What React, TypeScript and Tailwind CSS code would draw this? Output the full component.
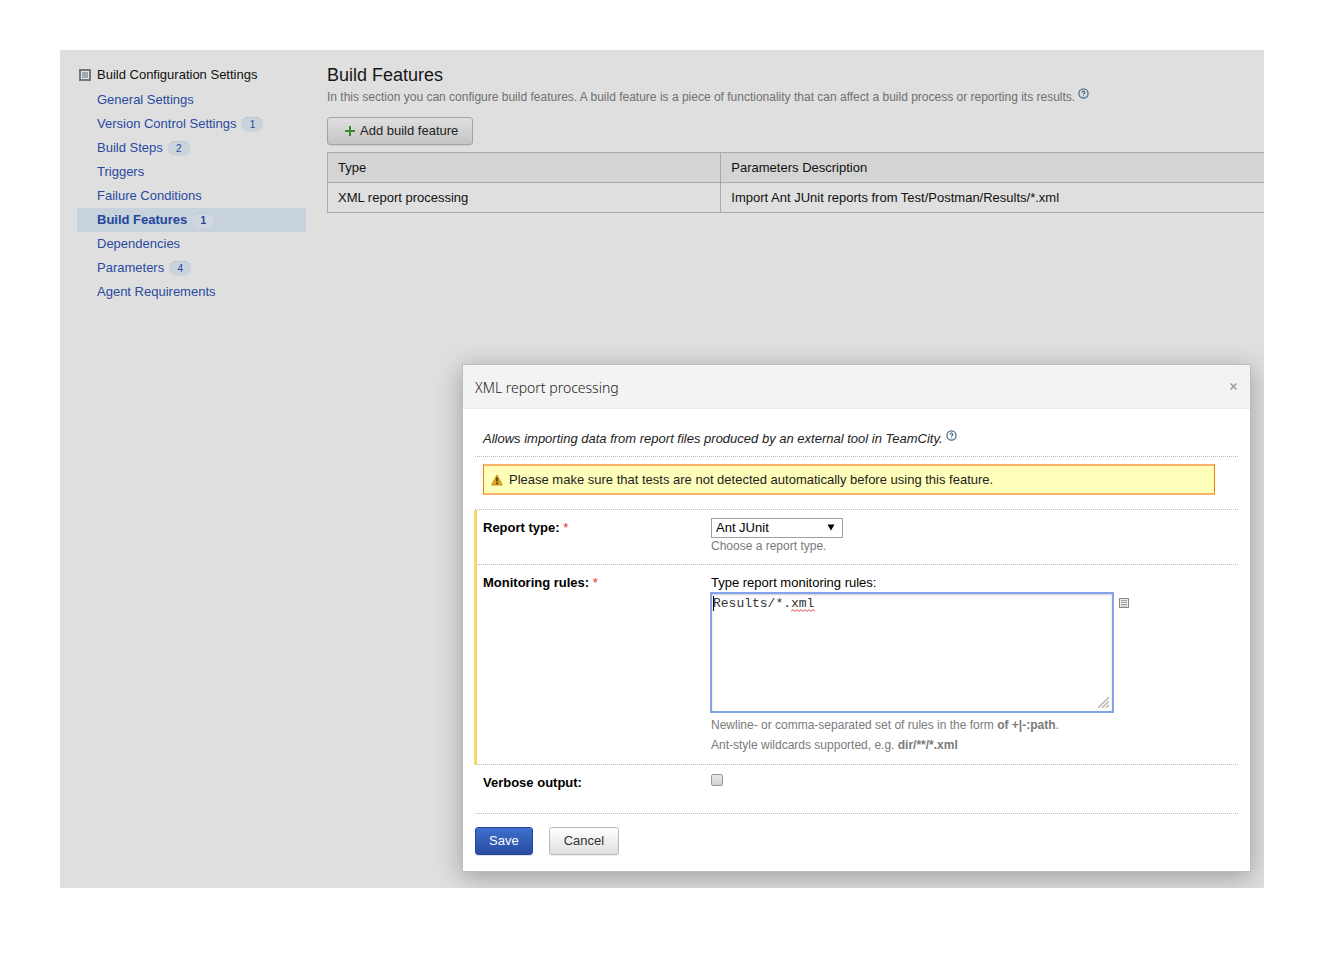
import React from "react";
import { CircleHelp } from "lucide-react";

type NavItem = { label: string; count?: number; active?: boolean };

const navItems: NavItem[] = [
  { label: "General Settings" },
  { label: "Version Control Settings", count: 1 },
  { label: "Build Steps", count: 2 },
  { label: "Triggers" },
  { label: "Failure Conditions" },
  { label: "Build Features", count: 1, active: true },
  { label: "Dependencies" },
  { label: "Parameters", count: 4 },
  { label: "Agent Requirements" },
];

function Sidebar() {
  return (
    <nav className="w-[229px] shrink-0" aria-label="Build configuration settings">
      <div className="mb-px flex h-6 items-center gap-[6px] pl-[2px] text-[#111]">
        <svg width="12" height="12" viewBox="0 0 12 12" aria-hidden="true">
          <rect x="1" y="1" width="10" height="10" fill="#e4e4e4" stroke="#777" strokeWidth="2" />
          <rect x="3" y="3" width="6" height="6" fill="#9dabb8" />
        </svg>
        <span>Build Configuration Settings</span>
      </div>
      <ul>
        {navItems.map((item) => (
          <li key={item.label}>
            <a
              href="#"
              aria-current={item.active ? "page" : undefined}
              className={
                item.active
                  ? "flex h-6 items-center gap-[5px] bg-[#c8d2dd] pl-5 font-bold text-[#24459c]"
                  : "flex h-6 items-center gap-[5px] pl-5 text-[#2a4aa0]"
              }
            >
              <span>{item.label}</span>
              {item.count !== undefined && (
                <span
                  className={
                    item.active
                      ? "flex h-[15px] w-[22px] items-center justify-center rounded-[7px] border-t border-[#bdc9d6] bg-[#d0d7df] text-[10px]"
                      : "flex h-[15px] w-[22px] items-center justify-center rounded-[7px] border-t border-[#b9c6d4] bg-[#cbd3dc] text-[10px]"
                  }
                >
                  {item.count}
                </span>
              )}
            </a>
          </li>
        ))}
      </ul>
    </nav>
  );
}

function HelpLink() {
  return (
    <a href="#" aria-label="Help" className="ml-[3px] inline-block align-[2px] text-[#4d708f]">
      <CircleHelp size={11} strokeWidth={2.8} />
    </a>
  );
}

function FeaturesPanel() {
  return (
    <section className="min-w-0 flex-1">
      <h1 className="h-6 text-[18px] leading-6 text-[#151515]">Build Features</h1>
      <p className="h-5 text-[12px] leading-5 whitespace-nowrap text-[#707070]">
        In this section you can configure build features. A build feature is a piece of functionality that can affect a
        build process or reporting its results.
        <HelpLink />
      </p>
      <button
        type="button"
        className="mt-[10px] flex h-7 items-center gap-[5px] rounded-[3px] border border-[#a3a3a3] bg-linear-to-b from-[#dfdfdf] to-[#c5c5c5] pr-[14px] pl-[17px] text-[#222] shadow-[0_1px_1px_#cfcfcf]"
      >
        <svg width="10" height="10" viewBox="0 0 10 10" aria-hidden="true">
          <path d="M5 0v10M0 5h10" stroke="#3c8a2a" strokeWidth="2" />
        </svg>
        Add build feature
      </button>
      <table className="mt-[7px] w-full border-collapse border border-r-0 border-[#a9a9a9] text-left text-[#111]">
        <thead>
          <tr className="h-[30px] bg-[#d4d4d4]">
            <th className="w-[42%] border border-[#a9a9a9] px-[10px] font-normal">Type</th>
            <th className="border border-r-0 border-[#a9a9a9] px-[10px] font-normal">Parameters Description</th>
          </tr>
        </thead>
        <tbody>
          <tr className="h-[30px]">
            <td className="border border-[#a9a9a9] px-[10px]">XML report processing</td>
            <td className="border border-r-0 border-[#a9a9a9] px-[10px]">
              Import Ant JUnit reports from Test/Postman/Results/*.xml
            </td>
          </tr>
        </tbody>
      </table>
    </section>
  );
}

function Required() {
  return <span className="font-normal text-[#e03030]">*</span>;
}

function ReportDialog() {
  return (
    <div
      role="dialog"
      aria-labelledby="dialog-title"
      className="mt-[60px] mr-[13px] mb-4 ml-[402px] border border-[#bcbcbc] bg-white text-black shadow-[0_5px_24px_rgba(0,0,0,0.3)]"
    >
      <header className="flex h-11 items-center justify-between border-b border-[#ebebeb] bg-[#f3f3f3] px-3">
        <h2 id="dialog-title" className="pt-[2px] font-['Noto_Sans',sans-serif] text-[14px] font-light text-[#222]">
          XML report processing
        </h2>
        <button type="button" aria-label="Close" className="flex h-4 w-[9px] items-center justify-center">
          <svg width="7" height="7" viewBox="0 0 7 7" aria-hidden="true">
            <path d="M0.5 0.5l6 6M6.5 0.5l-6 6" stroke="#999" strokeWidth="1.5" />
          </svg>
        </button>
      </header>

      <form className="px-3 pb-4" onSubmit={(e) => e.preventDefault()}>
        <p className="h-12 border-b border-dotted border-[#bbb] px-2 pt-5 leading-5 whitespace-nowrap text-[#222] italic">
          Allows importing data from report files produced by an external tool in TeamCity.
          <HelpLink />
        </p>
        <div className="border-b border-dotted border-[#bbb] pt-[7px] pr-[23px] pb-[14px] pl-2">
          <div className="flex h-[31px] items-center gap-[6px] border-x border-y-2 border-x-[#ee7d00] border-y-[#f9b26a] bg-[#ffffbb] px-[7px] text-[#222]">
            <svg width="12" height="12" viewBox="0 0 12 12" aria-hidden="true">
              <path d="M6 1L11.3 11H0.7Z" fill="#dba51f" stroke="#c0901c" strokeLinejoin="round" />
              <path d="M6 3.6v4" stroke="#4a3300" strokeWidth="1.6" />
              <path d="M6 8.6v1.6" stroke="#4a3300" strokeWidth="1.6" />
            </svg>
            Please make sure that tests are not detected automatically before using this feature.
          </div>
        </div>

        <div className="-ml-px border-l-3 border-[#f9d86b]">
          <div className="grid h-[55px] grid-cols-[226px_1fr] border-b border-dotted border-[#bbb] pt-2">
            <label htmlFor="report-type" className="pl-[6px] leading-5 font-bold">
              Report type: <Required />
            </label>
            <div className="pl-2">
              <div className="relative w-[132px]">
                <select
                  id="report-type"
                  defaultValue="junit"
                  className="block h-5 w-full appearance-none border border-[#a0a0a0] bg-white pl-1 leading-4"
                >
                  <option value="junit">Ant JUnit</option>
                </select>
                <svg
                  width="8"
                  height="7"
                  viewBox="0 0 8 7"
                  className="pointer-events-none absolute top-[6px] right-2"
                  aria-hidden="true"
                >
                  <path d="M0.5 0.5h7L4 6.5z" fill="#000" />
                </svg>
              </div>
              <p className="text-[12px] leading-4 text-[#7a7a7a]">Choose a report type.</p>
            </div>
          </div>

          <div className="grid grid-cols-[226px_1fr] border-b border-dotted border-[#bbb] pt-2 pb-[9px]">
            <label htmlFor="rules" className="pl-[6px] leading-5 font-bold">
              Monitoring rules: <Required />
            </label>
            <div className="pl-2">
              <p className="h-[19px] leading-5">Type report monitoring rules:</p>
              <div className="flex gap-[5px]">
                <div className="relative -ml-px w-[404px]">
                  <textarea
                    id="rules"
                    spellCheck={false}
                    defaultValue="Results/*.xml"
                    className="block h-[121px] w-full resize-none border-2 border-[#83a3ea] bg-white px-[1px] py-[2px] font-['Liberation_Mono',monospace] text-[13px] leading-4 text-[#333] shadow-[inset_0_1px_2px_#ccc] outline-none"
                  />
                  <span className="absolute top-1 left-[3px] h-[15px] w-px bg-black" aria-hidden="true" />
                  <svg
                    width="24"
                    height="3"
                    viewBox="0 0 24 3"
                    className="absolute top-[17px] left-[81px]"
                    aria-hidden="true"
                  >
                    <path
                      d="M0 2.5l2-2 2 2 2-2 2 2 2-2 2 2 2-2 2 2 2-2 2 2 2-2 2 2"
                      fill="none"
                      stroke="#e53a3a"
                    />
                  </svg>
                  <svg
                    width="11"
                    height="11"
                    viewBox="0 0 11 11"
                    className="absolute right-[5px] bottom-[5px]"
                    aria-hidden="true"
                  >
                    <path d="M0 11L11 0M4 11L11 4M8 11l3-3" stroke="#b3b3a0" strokeWidth="1.4" />
                  </svg>
                </div>
                <button type="button" aria-label="Choose files" className="mt-[6px] h-[10px] w-[10px]">
                  <svg width="10" height="10" viewBox="0 0 10 10" aria-hidden="true">
                    <rect x="0.5" y="0.5" width="9" height="9" fill="#eee" stroke="#888" />
                    <path d="M2 2.5h6M2 4.5h6M2 6.5h6" stroke="#a0a0a6" />
                    <path d="M2 8h6" stroke="#bbb" />
                  </svg>
                </button>
              </div>
              <p className="mt-[2px] text-[12px] leading-5 text-[#7a7a7a]">
                Newline- or comma-separated set of rules in the form <b>of +|-:path</b>.
                <br />
                Ant-style wildcards supported, e.g. <b>dir/**/*.xml</b>
              </p>
            </div>
          </div>
        </div>

        <div className="grid h-[49px] grid-cols-[228px_1fr] border-b border-dotted border-[#bbb] pt-2">
          <label htmlFor="verbose" className="pl-2 leading-5 font-bold">
            Verbose output:
          </label>
          <div className="pl-2">
            <input
              id="verbose"
              type="checkbox"
              className="mt-[1px] block h-3 w-3 appearance-none rounded-[2px] border border-[#999] bg-linear-to-b from-[#e8e8e8] to-[#d2d2d2]"
            />
          </div>
        </div>

        <div className="flex gap-4 pt-[13px]">
          <button
            type="submit"
            className="h-7 rounded-[3px] border border-[#27489c] bg-linear-to-b from-[#3d70cc] to-[#2a4ba3] px-[13px] text-white shadow-[0_1px_1px_#ddd]"
          >
            Save
          </button>
          <button
            type="button"
            className="h-7 rounded-[3px] border border-[#bbb] bg-linear-to-b from-white to-[#e0e0e0] px-[14px] text-[#333] shadow-[0_1px_1px_#eee]"
          >
            Cancel
          </button>
        </div>
      </form>
    </div>
  );
}

export default function App() {
  return (
    <div className="min-h-screen bg-white pt-[50px] pr-[70px] pb-[66px] pl-[60px] font-['Liberation_Sans',Arial,sans-serif] text-[13px] leading-5">
      <main className="flow-root overflow-hidden bg-[#dfdfdf]">
        <div className="flex gap-[21px] pt-[13px] pl-[17px]">
          <Sidebar />
          <FeaturesPanel />
        </div>
        <ReportDialog />
      </main>
    </div>
  );
}
